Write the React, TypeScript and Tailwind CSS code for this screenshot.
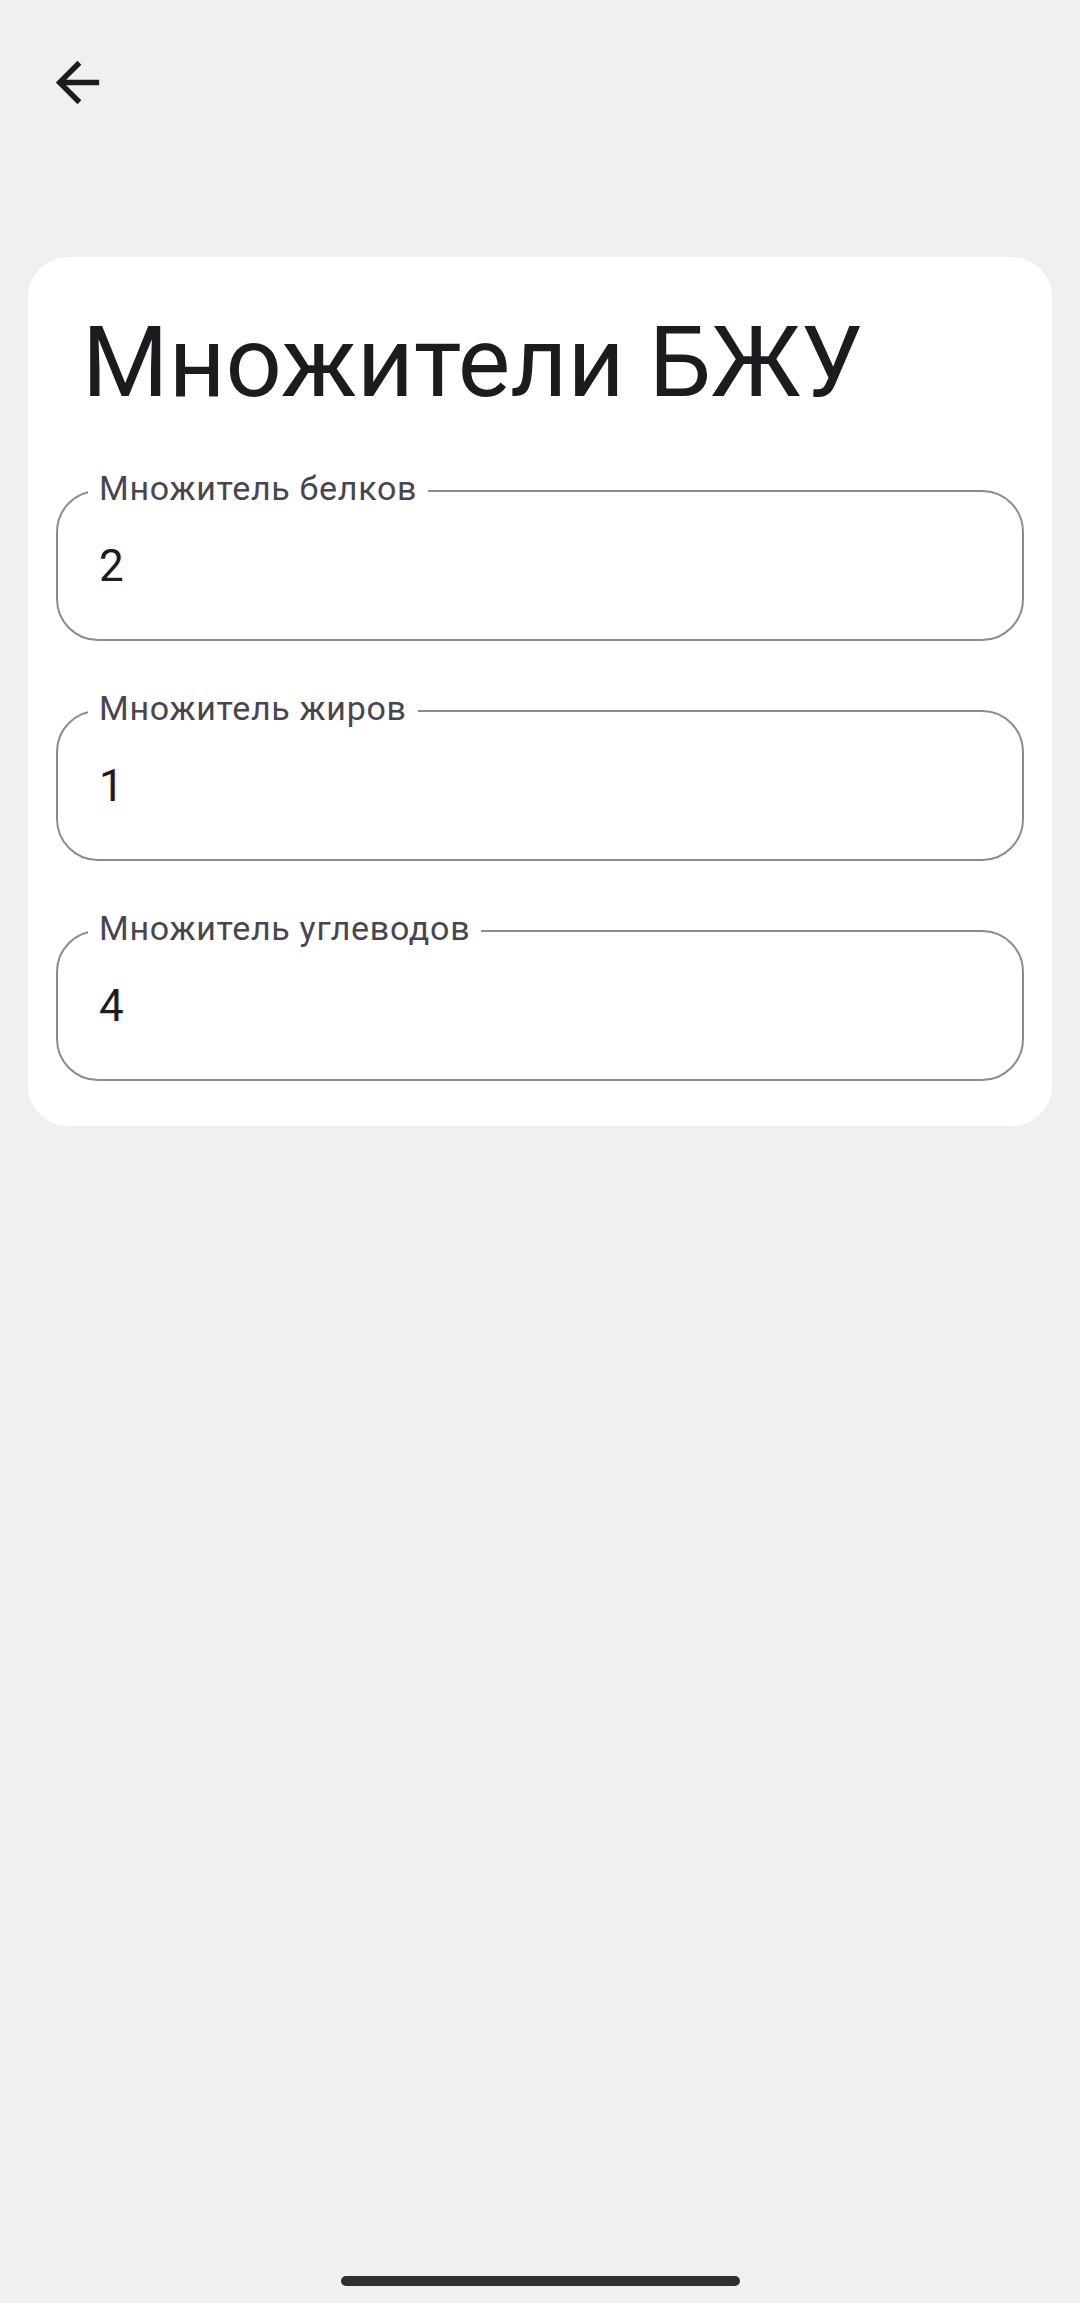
import React from "react";

function Field({ label, value }: { label: string; value: string }) {
  return (
    <div className="relative h-[151px] rounded-[42px] border-2 border-[#8c8c8c] flex items-center pl-[41px]">
      <span className="absolute left-[30px] top-[-21px] bg-white px-[11px] text-[34px] leading-[34px] text-[#49454f] tracking-[0.7px]">
        {label}
      </span>
      <span className="text-[44px] leading-none text-[#1c1b1f]">{value}</span>
    </div>
  );
}

export default function App() {
  return (
    <div
      className="min-h-[2303px] w-[1080px] bg-[#f0f0f0] flex flex-col"
      style={{ fontFamily: "Roboto, 'Noto Sans', sans-serif" }}
    >
      <div className="h-[257px] pl-[45px] pt-[50px]">
        <svg width="65" height="65" viewBox="0 0 24 24" fill="#1c1b1f">
          <path d="M20 11H7.83l5.59-5.59L12 4l-8 8 8 8 1.41-1.41L7.83 13H20v-2z" />
        </svg>
      </div>
      <div className="mx-[28px] bg-white rounded-[40px] pt-[56px] pb-[45px] px-[28px]">
        <h1 className="pl-[26px] text-[99px] leading-[98px] text-[#1c1b1f] font-normal">
          Множители БЖУ
        </h1>
        <div className="mt-[79px] flex flex-col gap-[69px]">
          <Field label="Множитель белков" value="2" />
          <Field label="Множитель жиров" value="1" />
          <Field label="Множитель углеводов" value="4" />
        </div>
      </div>
      <div className="mt-auto mb-[17px] mx-auto w-[399px] h-[10px] rounded-full bg-[#2f2f2f]" />
    </div>
  );
}
